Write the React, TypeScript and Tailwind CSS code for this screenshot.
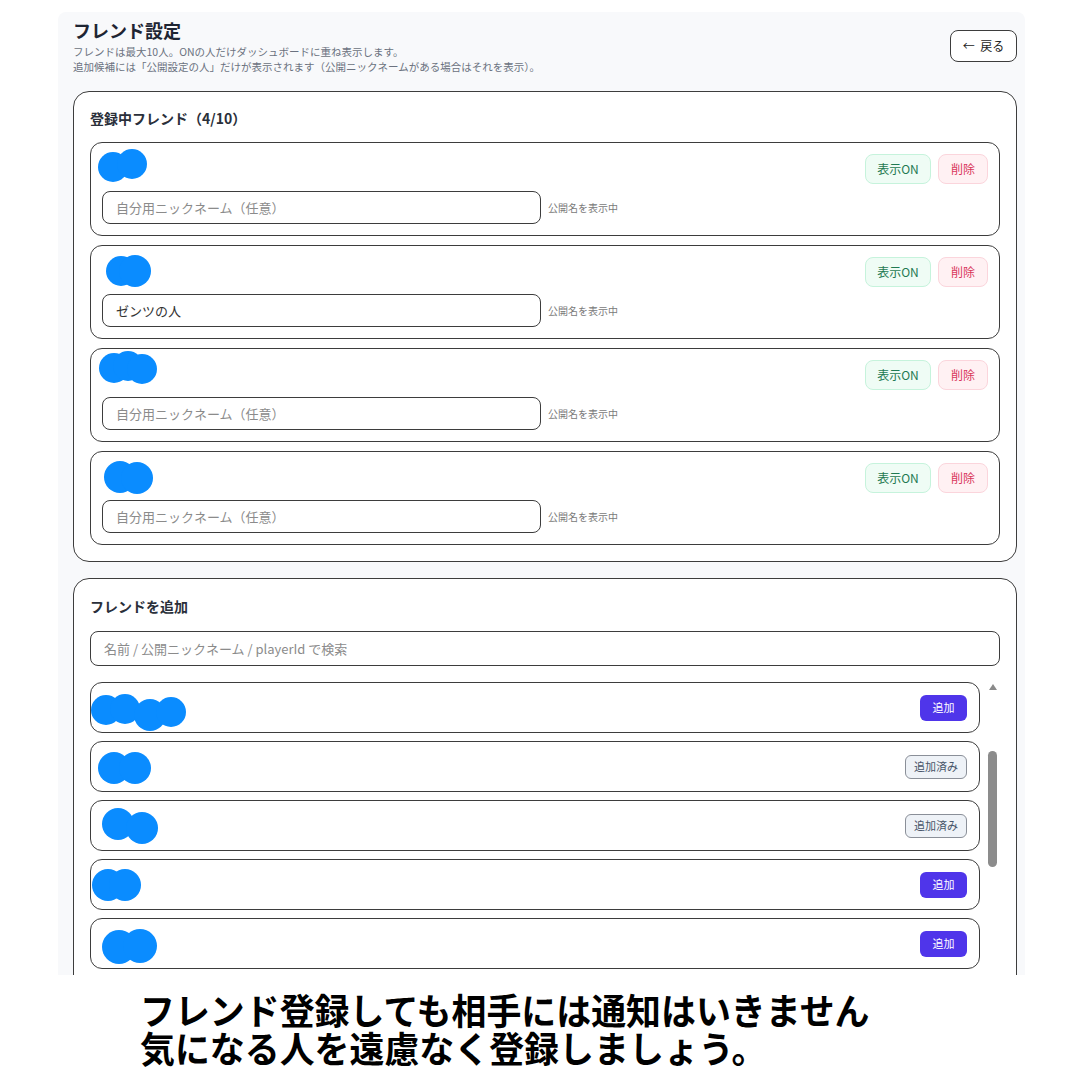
import React from 'react';

type Circle = [number, number, number];

interface Friend {
  id: number;
  blob: Circle[];
  nickname: string;
}

interface Candidate {
  id: number;
  blob: Circle[];
  added: boolean;
}

// redaction blobs, coordinates are local to each row
const friends: Friend[] = [
  { id: 1, blob: [[22, 24, 15], [41, 21, 15]], nickname: '' },
  { id: 2, blob: [[30, 25, 15], [44, 25, 16]], nickname: 'ゼンツの人' },
  { id: 3, blob: [[23, 19, 15], [37, 17, 15], [51, 20, 15]], nickname: '' },
  { id: 4, blob: [[29, 25, 16], [46, 26, 16]], nickname: '' },
];

const candidates: Candidate[] = [
  { id: 1, blob: [[15, 27, 15], [34, 26, 15], [59, 32, 16], [80, 29, 15]], added: false },
  { id: 2, blob: [[23, 26, 16], [44, 26, 16]], added: true },
  { id: 3, blob: [[27, 23, 16], [51, 27, 16]], added: true },
  { id: 4, blob: [[17, 25, 16], [34, 25, 16]], added: false },
  { id: 5, blob: [[28, 28, 17], [49, 27, 17]], added: false },
];

function Blob({ circles }: { circles: Circle[] }) {
  return (
    <svg className="absolute inset-0 w-full h-full pointer-events-none" aria-hidden>
      {circles.map(([cx, cy, r], i) => (
        <circle key={i} cx={cx} cy={cy} r={r} fill="#0a8cff" />
      ))}
    </svg>
  );
}

function FriendRow({ friend }: { friend: Friend }) {
  return (
    <div className="relative rounded-xl border border-[#3d3d3d] bg-white p-[11px]">
      <Blob circles={friend.blob} />
      <div className="flex justify-end gap-[7px]">
        <button className="h-[30px] w-[66px] rounded-lg border border-[#c6f3dc] bg-[#effcf5] text-[12px] text-[#1f7a52]">
          表示ON
        </button>
        <button className="h-[30px] w-[50px] rounded-lg border border-[#fbd5dc] bg-[#fff1f3] text-[12px] text-[#d9365b]">
          削除
        </button>
      </div>
      <div className="mt-[7px] flex items-center gap-[7px]">
        <input
          readOnly
          defaultValue={friend.nickname}
          placeholder="自分用ニックネーム（任意）"
          className="h-[33px] w-[439px] rounded-lg border border-[#3d3d3d] bg-white px-[13px] text-[13px] text-[#333] outline-none placeholder:text-[#8b8b8b]"
        />
        <span className="text-[10px] text-[#7a7a7a]">公開名を表示中</span>
      </div>
    </div>
  );
}

function CandidateRow({ c }: { c: Candidate }) {
  return (
    <div className="relative flex h-[51px] items-center justify-end rounded-xl border border-[#3d3d3d] bg-white pr-[12px]">
      <Blob circles={c.blob} />
      {c.added ? (
        <button className="h-[24px] w-[62px] rounded-md border border-[#8a8f98] bg-[#eef2f7] text-[11px] text-[#475569]">
          追加済み
        </button>
      ) : (
        <button className="h-[26px] w-[47px] rounded-md bg-[#4f35ea] text-[11px] text-white">
          追加
        </button>
      )}
    </div>
  );
}

export default function App() {
  return (
    <div className="w-[1080px] h-[1080px] bg-white font-['Noto_Sans_CJK_JP','Noto_Sans',sans-serif]">
      <div className="h-[975px] overflow-hidden pt-[12px]">
        <div className="ml-[58px] w-[967px] h-full rounded-t-lg bg-[#f8f9fb] pl-[15px] pr-[8px] pt-[6px]">
          <div className="flex items-center justify-between">
            <div>
              <h1 className="text-[18px] font-bold leading-[24px] text-[#1e2533]">フレンド設定</h1>
              <p className="mt-[2px] text-[10.5px] leading-[15px] text-[#6b7280]">
                フレンドは最大10人。ONの人だけダッシュボードに重ね表示します。
              </p>
              <p className="text-[10.5px] leading-[15px] text-[#6b7280]">
                追加候補には「公開設定の人」だけが表示されます（公開ニックネームがある場合はそれを表示）。
              </p>
            </div>
            <button className="h-[32px] w-[67px] rounded-lg border border-[#3d3d3d] bg-white text-[12px] text-[#222]">
              ←&nbsp;&nbsp;戻る
            </button>
          </div>

          <section className="mt-[17px] rounded-2xl border border-[#3d3d3d] bg-white px-[16px] pt-[16px] pb-[16px]">
            <h2 className="text-[14px] font-semibold leading-[20px] text-[#2a2f3a]">登録中フレンド（4/10）</h2>
            <div className="mt-[14px] flex flex-col gap-[9px]">
              {friends.map((f) => (
                <FriendRow key={f.id} friend={f} />
              ))}
            </div>
          </section>

          <section className="mt-[16px] h-[600px] rounded-2xl border border-[#3d3d3d] bg-white px-[16px] pt-[17px]">
            <h2 className="text-[14px] font-semibold leading-[20px] text-[#2a2f3a]">フレンドを追加</h2>
            <input
              readOnly
              placeholder="名前 / 公開ニックネーム / playerId で検索"
              className="mt-[15px] h-[35px] w-full rounded-lg border border-[#3d3d3d] bg-white px-[13px] text-[13px] outline-none placeholder:text-[#8b8b8b]"
            />
            <div className="mt-[16px] flex gap-[6px]">
              <div className="flex w-[890px] flex-col gap-[8px]">
                {candidates.map((c) => (
                  <CandidateRow key={c.id} c={c} />
                ))}
              </div>
              <div className="flex w-[13px] flex-col items-center">
                <div className="mt-[2px] h-0 w-0 border-x-[4px] border-b-[6px] border-x-transparent border-b-[#8a8a8a]" />
                <div className="mt-[61px] h-[116px] w-[9px] rounded-full bg-[#8c8c8c]" />
              </div>
            </div>
          </section>
        </div>
      </div>

      <div className="pl-[140px] pt-[15px]">
        <p className="origin-left scale-x-[0.97] text-[36px] font-bold leading-[38px] text-black whitespace-nowrap">
          フレンド登録しても相手には通知はいきません
        </p>
        <p className="origin-left scale-x-[0.97] text-[36px] font-bold leading-[38px] text-black whitespace-nowrap">
          気になる人を遠慮なく登録しましょう。
        </p>
      </div>
    </div>
  );
}
